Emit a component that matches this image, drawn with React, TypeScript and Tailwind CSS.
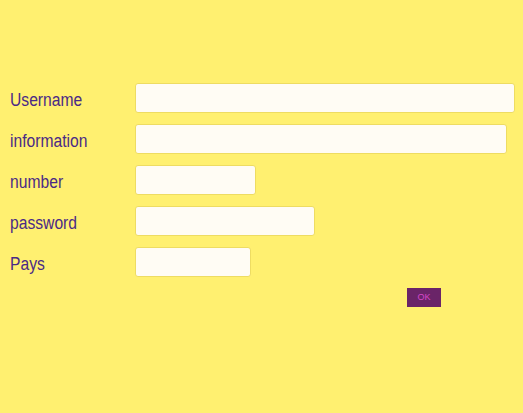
import React from 'react';

const fields = [
  { label: 'Username', width: 'w-[380px]' },
  { label: 'information', width: 'w-[372px]' },
  { label: 'number', width: 'w-[121px]' },
  { label: 'password', width: 'w-[180px]' },
  { label: 'Pays', width: 'w-[116px]' },
];

export default function App() {
  return (
    <div className="w-[523px] h-[413px] bg-[#fff070] pt-[83px] overflow-hidden">
      <div className="flex flex-col gap-[11px]">
        {fields.map(f => (
          <div key={f.label} className="flex items-center h-[30px]">
            <label className="w-[135px] pl-[10px] pt-[5px]">
              <span
                className="inline-block origin-left scale-x-[0.87] text-[18px] text-[#4a2a86]"
                style={{ fontFamily: '"Liberation Sans", Arial, sans-serif' }}
              >
                {f.label}
              </span>
            </label>
            <input
              type="text"
              className={`${f.width} h-[30px] rounded-[3px] border border-[#eedc62] bg-[#fffcf4] outline-none`}
            />
          </div>
        ))}
      </div>
      <div className="flex pl-[407px] mt-[11px]">
        <button
          className="w-[34px] h-[19px] bg-[#6a2468] text-[#d648c8] text-[9px] leading-none"
          style={{ fontFamily: '"Liberation Sans", Arial, sans-serif' }}
        >
          OK
        </button>
      </div>
    </div>
  );
}
